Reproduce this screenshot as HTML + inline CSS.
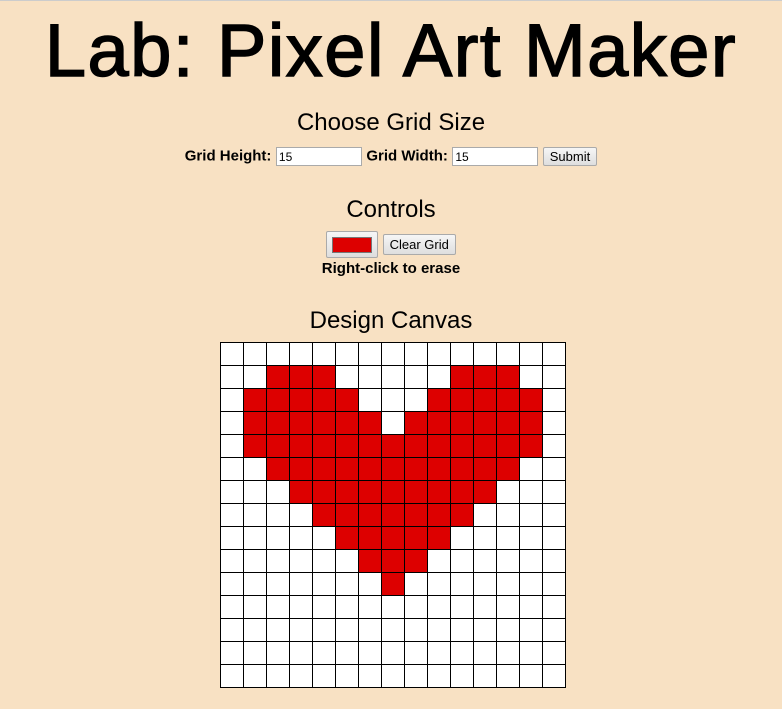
<!DOCTYPE html>
<html><head><style>
body{margin:0;width:782px;height:709px;background:#f8e1c3;font-family:"Liberation Sans",sans-serif;position:relative;overflow:hidden;border-top:1px solid #ccc;box-sizing:border-box}
.a{position:absolute;left:0;width:782px;text-align:center;color:#000}
h1{margin:0;font-weight:normal;font-size:74px;letter-spacing:1.5px;-webkit-text-stroke:1.5px #000}
.h2{font-size:24px}
.lbl{font-weight:bold;font-size:15px}
input.t{width:80px;height:17px;border:1px solid #aaa;font-size:12px;padding:0 2px;vertical-align:middle;font-family:"Liberation Sans",sans-serif}
.btn{display:inline-block;border:1px solid #aaa;background:linear-gradient(#f6f6f6,#dedede);font-size:13px;padding:1px 6px;border-radius:2px;vertical-align:middle}
table{position:absolute;left:220px;top:341px;border-collapse:collapse}
td{width:22px;height:22px;padding:0;border:1px solid #000;background:#fff}
td.r{background:#dd0000}
</style></head><body>
<div class="a" style="top:7px"><h1>Lab: Pixel Art Maker</h1></div>
<div class="a h2" style="top:108px">Choose Grid Size</div>
<div class="a" style="top:146px"><span class="lbl">Grid Height:</span> <input class="t" value="15"> <span class="lbl">Grid Width:</span> <input class="t" value="15"> <span class="btn">Submit</span></div>
<div class="a h2" style="top:195px">Controls</div>
<div class="a" style="top:230px"><span class="btn" style="padding:4px 5px"><span style="display:inline-block;width:38px;height:14px;background:#dd0000;border:1px solid #777;vertical-align:middle"></span></span> <span class="btn" style="padding:2px 6px">Clear Grid</span></div>
<div class="a lbl" style="top:259px">Right-click to erase</div>
<div class="a h2" style="top:306px">Design Canvas</div>
<table id="g"></table>
<script>
var R=[[],[2,4,10,12],[1,5,9,13],[1,6,8,13],[1,13],[2,12],[3,11],[4,10],[5,9],[6,8],[7,7],[],[],[],[]];
var h="";for(var i=0;i<15;i++){h+="<tr>";for(var j=0;j<15;j++){var r=R[i],red=false;for(var k=0;k<r.length;k+=2)if(j>=r[k]&&j<=r[k+1])red=true;h+='<td'+(red?' class="r"':'')+'></td>';}h+="</tr>";}
document.getElementById("g").innerHTML=h;
</script>
</body></html>
